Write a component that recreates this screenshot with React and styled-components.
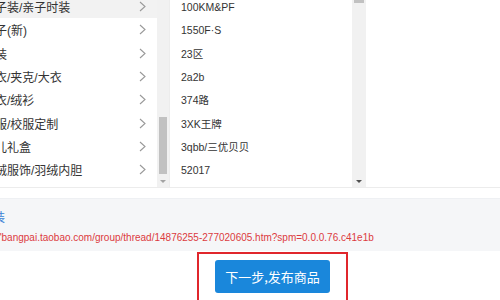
import React from 'react';
import styled, { createGlobalStyle } from 'styled-components';

const GlobalStyle = createGlobalStyle`
  html, body {
    margin: 0;
    padding: 0;
    background: #fff;
    overflow: hidden;
  }
  body {
    font-family: "Liberation Sans", "Noto Sans CJK SC", sans-serif;
  }
`;

const leftItems = [
  '子装/亲子时装',
  '子(新)',
  '装',
  '衣/夹克/大衣',
  '衣/绒衫',
  '服/校服定制',
  '儿礼盒',
  '绒服饰/羽绒内胆',
];

const rightItems = [
  '100KM&PF',
  '1550F·S',
  '23区',
  '2a2b',
  '374路',
  '3XK王牌',
  '3qbb/三优贝贝',
  '52017',
];

const Page = styled.div`
  width: 500px;
  height: 300px;
  display: flex;
  flex-direction: column;
  overflow: hidden;
`;

const Lists = styled.div`
  height: 187px;
  display: flex;
  border-bottom: 1px solid #ececec;
  flex-shrink: 0;
`;

const Column = styled.div`
  width: ${p => p.w}px;
  height: 100%;
  overflow: hidden;
  border-left: ${p => (p.bordered ? '1px solid #ececec' : 'none')};
`;

const Items = styled.ul`
  list-style: none;
  margin: -5px 0 0;
  padding: 0;
`;

const Item = styled.li`
  height: 23.3px;
  display: flex;
  align-items: center;
  justify-content: space-between;
  padding-left: ${p => (p.left ? '0' : '11px')};
  padding-right: ${p => (p.left ? '11px' : '0')};
  background: ${p => (p.active ? '#f2f2f2' : 'transparent')};
  font-size: ${p => (p.left ? '12px' : '10.5px')};
  color: #333;
  white-space: nowrap;
`;

const Label = styled.span`
  margin-left: ${p => (p.clip ? '-5px' : '0')};
`;

const Scrollbar = styled.div`
  width: ${p => p.w}px;
  height: 100%;
  background: #f1f1f1;
  position: relative;
`;

const Thumb = styled.div`
  position: absolute;
  left: 2px;
  right: 2px;
  top: ${p => p.top}px;
  height: ${p => p.h}px;
  background: #c1c1c1;
`;

const DownArrow = styled.div`
  position: absolute;
  bottom: 4px;
  left: 50%;
  margin-left: -3px;
  width: 0;
  height: 0;
  border-left: 3px solid transparent;
  border-right: 3px solid transparent;
  border-top: 3px solid ${p => p.c};
`;

const Gap = styled.div`
  height: 10px;
  flex-shrink: 0;
`;

const Band = styled.div`
  height: 53px;
  background: #f5f6f8;
  border-top: 1px solid #eef0f3;
  display: flex;
  flex-direction: column;
  padding-top: 12px;
  box-sizing: border-box;
  flex-shrink: 0;
`;

const Tag = styled.div`
  font-size: 12px;
  color: #3a7fd6;
  margin-left: -7px;
  line-height: 14px;
`;

const Link = styled.div`
  margin-top: 6px;
  font-size: 10px;
  color: #dc3a40;
  line-height: 14px;
  margin-left: -2px;
  white-space: nowrap;
`;

const Footer = styled.div`
  flex: 1;
  display: flex;
  justify-content: center;
  padding-top: 1px;
  padding-left: 45px;
`;

const Highlight = styled.div`
  width: 151px;
  height: 60px;
  border: 2px solid #e0262c;
  box-sizing: border-box;
  display: flex;
  justify-content: center;
  padding-top: 6px;
`;

const Button = styled.button`
  width: 115px;
  height: 33px;
  border: none;
  border-radius: 3px;
  background: #1a87db;
  color: #fff;
  font-size: 13px;
  font-family: "Noto Sans CJK SC", sans-serif;
  padding: 0;
  cursor: pointer;
`;

const Chevron = () => (
  <svg width="7" height="11" viewBox="0 0 7 11">
    <polyline points="1,1 6,5.5 1,10" fill="none" stroke="#999" strokeWidth="1.1" />
  </svg>
);

export default function App() {
  return (
    <Page>
      <GlobalStyle />
      <Lists>
        <Column w={157}>
          <Items>
            {leftItems.map((t, i) => (
              <Item key={t} left active={i === 0}>
                <Label clip>{t}</Label>
                <Chevron />
              </Item>
            ))}
          </Items>
        </Column>
        <Scrollbar w={12}>
          <Thumb top={117} h={57} />
          <DownArrow c="#a3a3a3" />
        </Scrollbar>
        <Column w={182} bordered>
          <Items>
            {rightItems.map(t => (
              <Item key={t}>
                <Label>{t}</Label>
              </Item>
            ))}
          </Items>
        </Column>
        <Scrollbar w={14}>
          <Thumb top={0} h={3} />
          <DownArrow c="#505050" />
        </Scrollbar>
      </Lists>
      <Gap />
      <Band>
        <Tag>装</Tag>
        <Link>"bangpai.taobao.com/group/thread/14876255-277020605.htm?spm=0.0.0.76.c41e1b</Link>
      </Band>
      <Footer>
        <Highlight>
          <Button>下一步,发布商品</Button>
        </Highlight>
      </Footer>
    </Page>
  );
}
